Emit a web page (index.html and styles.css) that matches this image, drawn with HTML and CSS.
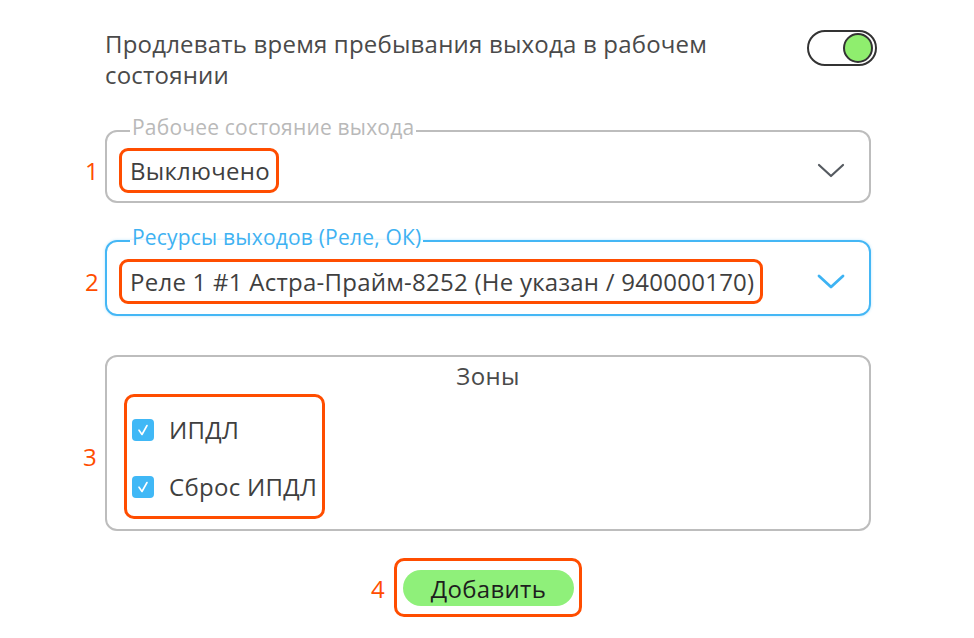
FILE: index.html
```html
<!DOCTYPE html>
<html lang="ru">
<head>
<meta charset="utf-8">
<link rel="stylesheet" href="styles.css">
</head>
<body>
<main class="form">
  <div class="head-row">
    <p class="head-text">Продлевать время пребывания выхода в рабочем состоянии</p>
    <span class="toggle"><span class="knob"></span></span>
  </div>

  <fieldset class="field">
    <legend class="legend">Рабочее состояние выхода</legend>
    <div class="select-row">
      <span class="mark mark-1">1</span>
      <span class="value hl">Выключено</span>
      <svg class="chev" width="28" height="16" viewBox="0 0 28 16"><path d="M2 2 L14 13 L26 2" fill="none" stroke="#555a60" stroke-width="2.2" stroke-linecap="round" stroke-linejoin="round"/></svg>
    </div>
  </fieldset>

  <fieldset class="field field-active">
    <legend class="legend legend-active">Ресурсы выходов (Реле, ОК)</legend>
    <div class="select-row">
      <span class="mark mark-2">2</span>
      <span class="value hl">Реле 1 #1 Астра-Прайм-8252 (Не указан / 940000170)</span>
      <svg class="chev" width="28" height="16" viewBox="0 0 28 16"><path d="M2 2 L14 13 L26 2" fill="none" stroke="#3db3f3" stroke-width="2.8" stroke-linecap="round" stroke-linejoin="round"/></svg>
    </div>
  </fieldset>

  <section class="zones">
    <h3 class="zones-title">Зоны</h3>
    <div class="checks">
      <span class="mark mark-3">3</span>
      <label class="check"><span class="box"><svg width="22" height="22" viewBox="0 0 22 22"><path d="M7 11.2 L10 15.5 L15 6.5" fill="none" stroke="#fff" stroke-width="1.6" stroke-linecap="round" stroke-linejoin="round"/></svg></span>ИПДЛ</label>
      <label class="check"><span class="box"><svg width="22" height="22" viewBox="0 0 22 22"><path d="M7 11.2 L10 15.5 L15 6.5" fill="none" stroke="#fff" stroke-width="1.6" stroke-linecap="round" stroke-linejoin="round"/></svg></span>Сброс ИПДЛ</label>
    </div>
  </section>

  <div class="actions">
    <span class="btn-wrap">
      <span class="mark mark-4">4</span>
      <button class="btn">Добавить</button>
    </span>
  </div>
</main>
</body>
</html>
```

FILE: styles.css
```css
* { box-sizing: border-box; }
html, body { margin: 0; background: #fff; }
body {
  font-family: "Open Sans", "Noto Sans", sans-serif;
  color: #4a4a4a;
}
.form {
  width: 974px;
  height: 638px;
  padding: 28px 103px 0 105px;
  display: flex;
  flex-direction: column;
}
.head-row {
  display: flex;
  justify-content: space-between;
  align-items: flex-start;
}
.head-text {
  margin: 0;
  width: 660px;
  font-size: 24px;
  letter-spacing: 0.2px;
  line-height: 31px;
  color: #4a4a4a;
}
.toggle {
  margin-top: 2px;
  margin-right: -6px;
  width: 70px;
  height: 36px;
  border: 2px solid #333;
  border-radius: 18px;
  display: flex;
  align-items: center;
  justify-content: flex-end;
  padding-right: 2px;
}
.knob {
  width: 30px;
  height: 30px;
  border-radius: 50%;
  background: #8fee6e;
  border: 2px solid #333;
}
.field {
  margin: 25px 0 0;
  padding: 0 24px 8px 13px;
  border: 2px solid #bdbdbd;
  border-radius: 12px;
  min-width: 0;
}
.field-active {
  margin-top: 22px;
  padding-bottom: 10px;
  border-color: #45b7f5;
  box-shadow: 0 0 3px rgba(69,183,245,0.35);
}
.legend {
  margin-left: 10px;
  padding: 0 2px 8px;
  font-size: 21px;
  letter-spacing: 0.2px;
  line-height: 24px;
  color: #b9b9b9;
}
.legend-active { color: #3fb2f2; }
.select-row {
  position: relative;
  display: flex;
  justify-content: space-between;
  align-items: center;
  margin-top: 1px;
}
.field-active .select-row { margin-top: 2px; }
.value {
  font-size: 24px;
  letter-spacing: 0.25px;
  line-height: 39px;
  color: #3f3f3f;
}
.hl {
  border: 3px solid #ff4d00;
  border-radius: 9px;
  padding: 0 6px 0 8px;
  margin-left: -1px;
}
.chev { flex: none; }
.mark {
  position: absolute;
  top: 50%;
  transform: translateY(-50%);
  color: #ff4d00;
  font-size: 24px;
  line-height: 26px;
}
.mark-1 { left: -35px; }
.mark-2 { left: -35px; }
.mark-3 { left: -44px; }
.mark-4 { left: -26px; margin-top: 1px; }
.zones {
  margin-top: 39px;
  height: 176px;
  border: 2px solid #bdbdbd;
  border-radius: 12px;
  padding: 0 0 0 17px;
}
.zones-title {
  margin: 0 0 0 -17px;
  text-align: center;
  font-weight: normal;
  font-size: 24px;
  letter-spacing: 0.3px;
  line-height: 37px;
  color: #4a4a4a;
}
.checks {
  position: relative;
  display: inline-flex;
  flex-direction: column;
  gap: 15px;
  border: 3px solid #ff4d00;
  border-radius: 10px;
  padding: 12px 5px 8px 5px;
}
.check {
  display: flex;
  align-items: center;
  gap: 15px;
  font-size: 24px;
  letter-spacing: 0.3px;
  line-height: 42px;
  color: #3f3f3f;
}
.box {
  width: 22px;
  height: 22px;
  border-radius: 4px;
  background: #40b8f6;
  display: flex;
  align-items: center;
  justify-content: center;
}
.box svg { display: block; }
.actions {
  display: flex;
  justify-content: center;
  margin-top: 27px;
}
.btn-wrap {
  position: relative;
  display: inline-flex;
  border: 3px solid #ff4d00;
  border-radius: 10px;
  padding: 9px 5px 8px 6px;
}
.btn {
  width: 171px;
  height: 36px;
  border: none;
  border-radius: 18px;
  background: #8ff07a;
  font-family: "Open Sans", "Noto Sans", sans-serif;
  font-size: 24px;
  letter-spacing: 0.3px;
  color: #1e1e1e;
  padding: 0;
}
```
